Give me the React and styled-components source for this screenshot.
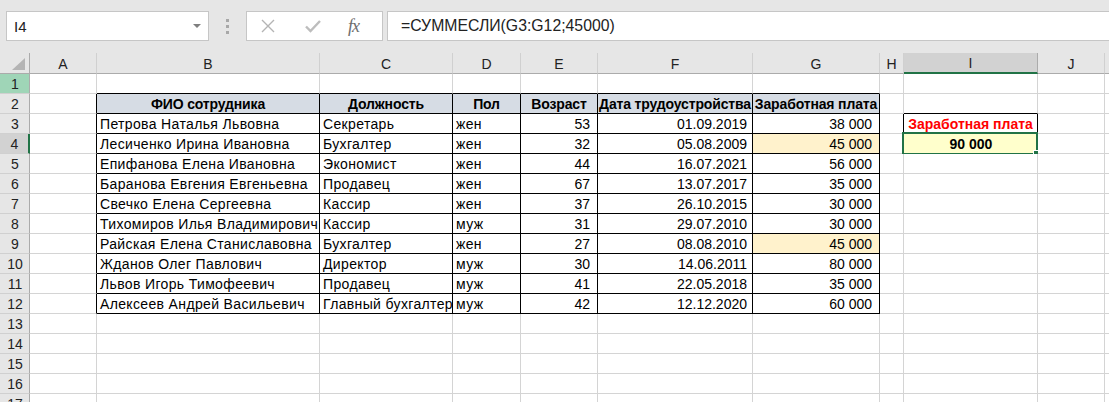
import React from 'react';
import styled, { createGlobalStyle } from 'styled-components';

const GlobalStyle = createGlobalStyle`
  html, body {
    margin: 0;
    padding: 0;
    background: #fff;
  }
  body {
    font-family: "Liberation Sans", Arial, sans-serif;
  }
`;

const Page = styled.div`
  width: 100%;
  height: 100vh;
  overflow: hidden;
  display: flex;
  flex-direction: column;
`;

const TopBar = styled.div`
  height: 53px;
  flex: 0 0 53px;
  box-sizing: border-box;
  padding-top: 11px;
  background: #e6e6e6;
  display: flex;
  align-items: flex-start;
`;

const NameBox = styled.div`
  margin-left: 6px;
  width: 203px;
  height: 30px;
  box-sizing: border-box;
  border: 1px solid #c6c6c6;
  background: #fff;
  display: flex;
  align-items: center;
  justify-content: space-between;
  padding: 0 7px 0 7px;
  font-size: 15px;
  color: #222;
`;

const DropArrow = styled.span`
  width: 0;
  height: 0;
  border-left: 4px solid transparent;
  border-right: 4px solid transparent;
  border-top: 4px solid #7f7f7f;
`;

const Grip = styled.div`
  margin-left: 17px;
  padding-top: 8px;
  display: flex;
  flex-direction: column;
  gap: 3px;
`;

const GripDot = styled.span`
  width: 3px;
  height: 3px;
  background: #a8a8a8;
`;

const FxBox = styled.div`
  margin-left: 17px;
  width: 137px;
  height: 30px;
  box-sizing: border-box;
  border: 1px solid #c6c6c6;
  background: #fff;
  display: flex;
  align-items: center;
  padding-left: 13px;
`;

const IconSlot = styled.span`
  width: ${p => p.$w}px;
  display: flex;
  align-items: center;
  justify-content: flex-start;
`;

const FxLabel = styled.span`
  font-family: "Liberation Serif", "DejaVu Serif", serif;
  font-style: italic;
  font-size: 18px;
  color: #6e6e6e;
  letter-spacing: -1px;
`;

const FormulaInput = styled.div`
  margin-left: 4px;
  flex: 1;
  height: 30px;
  box-sizing: border-box;
  border: 1px solid #c6c6c6;
  border-right: none;
  background: #fff;
  display: flex;
  align-items: center;
  padding-left: 13px;
  font-size: 15.8px;
  color: #222;
`;

const COLS = '30px 67px 223px 133px 68px 77px 155px 127px 24px 134px 67px 1fr';

const Sheet = styled.div`
  flex: 1;
  display: grid;
  grid-template-columns: ${COLS};
  grid-auto-rows: 20px;
  grid-template-rows: 21px;
  overflow: hidden;
  font-size: 14px;
`;

const Corner = styled.div`
  box-sizing: border-box;
  background: #e6e6e6;
  border-right: 1px solid #ababab;
  border-bottom: 1px solid #ababab;
  display: flex;
  align-items: flex-end;
  justify-content: flex-end;
  padding: 0 4px 3px 0;
`;

const ColHead = styled.div`
  box-sizing: border-box;
  background: ${p => (p.$active ? '#d2d2d2' : '#e6e6e6')};
  border-right: 1px solid ${p => (p.$active ? '#ababab' : '#d0d0d0')};
  border-bottom: ${p => (p.$active ? '2px solid #217346' : '1px solid #ababab')};
  display: flex;
  align-items: center;
  justify-content: center;
  padding-top: 1px;
  color: #222;
  font-size: 14px;
`;

const RowHead = styled.div`
  box-sizing: border-box;
  background: ${p => p.$bg};
  border-right: ${p => (p.$active ? '2px solid #217346' : '1px solid #ababab')};
  border-bottom: 1px solid #d0d0d0;
  display: flex;
  align-items: center;
  justify-content: center;
  padding-left: 1px;
  color: #222;
  font-size: 14px;
`;

const Cell = styled.div`
  position: relative;
  box-sizing: border-box;
  border-right: 1px solid ${p => p.$rb};
  border-bottom: 1px solid ${p => p.$bb};
  background: ${p => p.$bg || '#fff'};
  color: ${p => p.$color || '#000'};
  font-weight: ${p => (p.$bold ? 700 : 400)};
  letter-spacing: ${p => p.$ls || 0}px;
  display: flex;
  align-items: center;
  justify-content: ${p => p.$align};
  padding: 1px ${p => p.$pr}px 0 ${p => p.$pl}px;
  white-space: nowrap;
  overflow: ${p => (p.$selected ? 'visible' : 'hidden')};
  line-height: 19px;
`;

const CellText = styled.span`
  white-space: nowrap;
  flex: none;
`;

const Selection = styled.div`
  position: absolute;
  left: -2px;
  top: -2px;
  width: 136px;
  height: 23px;
  box-sizing: border-box;
  border: 2px solid #217346;
  pointer-events: none;
`;

const FillHandle = styled.div`
  position: absolute;
  left: 129px;
  top: 16px;
  width: 5px;
  height: 5px;
  background: #217346;
  border: 1px solid #fff;
`;

const LETTERS = ['A', 'B', 'C', 'D', 'E', 'F', 'G', 'H', 'I', 'J', ''];

const HEADER = ['ФИО сотрудника', 'Должность', 'Пол', 'Возраст', 'Дата трудоустройства', 'Заработная плата'];

const DATA = [
  ['Петрова Наталья Львовна', 'Секретарь', 'жен', '53', '01.09.2019', '38 000'],
  ['Лесиченко Ирина Ивановна', 'Бухгалтер', 'жен', '32', '05.08.2009', '45 000', true],
  ['Епифанова Елена Ивановна', 'Экономист', 'жен', '44', '16.07.2021', '56 000'],
  ['Баранова Евгения Евгеньевна', 'Продавец', 'жен', '67', '13.07.2017', '35 000'],
  ['Свечко Елена Сергеевна', 'Кассир', 'жен', '37', '26.10.2015', '30 000'],
  ['Тихомиров Илья Владимирович', 'Кассир', 'муж', '31', '29.07.2010', '30 000'],
  ['Райская Елена Станиславовна', 'Бухгалтер', 'жен', '27', '08.08.2010', '45 000', true],
  ['Жданов Олег Павлович', 'Директор', 'муж', '30', '14.06.2011', '80 000'],
  ['Львов Игорь Тимофеевич', 'Продавец', 'муж', '41', '22.05.2018', '35 000'],
  ['Алексеев Андрей Васильевич', 'Главный бухгалтер', 'муж', '42', '12.12.2020', '60 000'],
];

const ROWS = 17;

// which cells carry a thin black border
const boxed = (r, c) => (r >= 2 && r <= 12 && c >= 1 && c <= 6) || (r === 3 && c === 8);

// padding-right for right aligned numbers, by column
const NUM_PAD = { 4: 7, 5: 5, 6: 7 };

function cellContent(r, c) {
  if (r === 2 && c >= 1 && c <= 6) {
    return { text: HEADER[c - 1], bold: true, align: 'center', bg: '#d6dce4', pr: 0, pl: 0, ls: -0.15 };
  }
  if (r >= 3 && r <= 12 && c >= 1 && c <= 6) {
    const row = DATA[r - 3];
    const isNum = c >= 4;
    return {
      text: row[c - 1],
      align: isNum ? 'flex-end' : 'flex-start',
      pr: isNum ? NUM_PAD[c] : 2,
      ls: isNum ? 0 : 0.35,
      bg: c === 6 && row[6] ? '#fff2cc' : undefined,
    };
  }
  if (r === 3 && c === 8) {
    return { text: 'Заработная плата', bold: true, align: 'center', color: '#ff0000', pl: 0, pr: 0 };
  }
  if (r === 4 && c === 8) {
    return { text: '90 000', bold: true, align: 'center', bg: '#ffffcc', selected: true };
  }
  return null;
}

const CrossIcon = () => (
  <svg width="16" height="16" viewBox="0 0 16 16">
    <path d="M2 2 L14 14 M14 2 L2 14" stroke="#b4b4b4" strokeWidth="1.4" fill="none" />
  </svg>
);

const CheckIcon = () => (
  <svg width="18" height="16" viewBox="0 0 18 16">
    <path d="M2 8.5 L6.5 13 L16 3" stroke="#bdbdbd" strokeWidth="2.4" fill="none" />
  </svg>
);

const CornerTriangle = () => (
  <svg width="13" height="12" viewBox="0 0 13 12">
    <path d="M13 0 L13 12 L0 12 Z" fill="#b4b4b4" />
  </svg>
);

const App = () => {
  const rows = [];
  for (let r = 1; r <= ROWS; r++) {
    rows.push(
      <RowHead
        key={`h${r}`}
        $bg={r === 1 ? '#9fd5b7' : r === 4 ? '#d2d2d2' : '#e6e6e6'}
        $active={r === 4}
      >
        {r}
      </RowHead>
    );
    for (let c = 0; c < LETTERS.length; c++) {
      const info = cellContent(r, c) || {};
      const rb = boxed(r, c) || boxed(r, c + 1) ? '#000' : '#d4d4d4';
      const bb = boxed(r, c) || boxed(r + 1, c) ? '#000' : '#d4d4d4';
      rows.push(
        <Cell
          key={`${r}-${c}`}
          $rb={rb}
          $bb={bb}
          $bg={info.bg}
          $color={info.color}
          $bold={info.bold}
          $ls={info.ls}
          $align={info.align || 'flex-start'}
          $pr={info.pr ?? 2}
          $pl={info.pl ?? 3}
          $selected={info.selected}
        >
          {info.text && <CellText>{info.text}</CellText>}
          {info.selected && (
            <Selection>
              <FillHandle />
            </Selection>
          )}
        </Cell>
      );
    }
  }

  return (
    <Page>
      <GlobalStyle />
      <TopBar>
        <NameBox>
          <span>I4</span>
          <DropArrow />
        </NameBox>
        <Grip>
          <GripDot />
          <GripDot />
          <GripDot />
        </Grip>
        <FxBox>
          <IconSlot $w={44}><CrossIcon /></IconSlot>
          <IconSlot $w={44}><CheckIcon /></IconSlot>
          <IconSlot $w={30}><FxLabel>fx</FxLabel></IconSlot>
        </FxBox>
        <FormulaInput>=СУММЕСЛИ(G3:G12;45000)</FormulaInput>
      </TopBar>
      <Sheet>
        <Corner>
          <CornerTriangle />
        </Corner>
        {LETTERS.map(l => (
          <ColHead key={l || 'k'} $active={l === 'I'}>{l}</ColHead>
        ))}
        {rows}
      </Sheet>
    </Page>
  );
};

export default App;
